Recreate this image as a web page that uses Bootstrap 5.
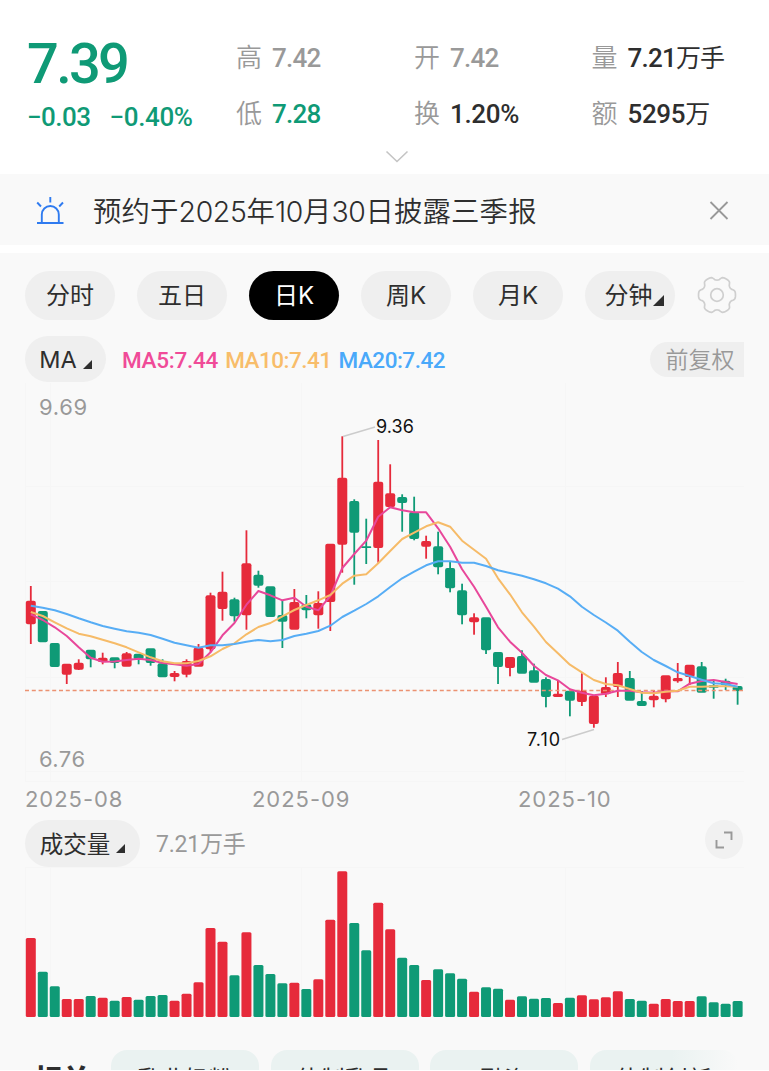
<!DOCTYPE html>
<html lang="zh-CN">
<head>
<meta charset="utf-8">
<meta name="viewport" content="width=device-width, initial-scale=1">
<title>日K</title>
<link href="https://cdn.jsdelivr.net/npm/bootstrap@5.3.0/dist/css/bootstrap.min.css" rel="stylesheet">
<style>
:root{--up:#e62a3b;--down:#0f9a76;--ink:#2e2e2e;--mute:#999}
body{font-family:Roboto,"Noto Sans CJK SC",sans-serif;color:var(--ink);background:#fff;line-height:1;overflow:hidden;height:1071px}
.quote{height:174px;padding:36px 0 0 27px}
.quote-main{width:209px;color:var(--down)}
.price{font-size:56px;font-weight:500;letter-spacing:-2.7px;line-height:56px}
.change{font-size:26px;font-weight:500;letter-spacing:-.55px;line-height:28px;margin-top:11px;gap:19px}
.change span+span{letter-spacing:-.35px}
.stat{font-size:26px;line-height:30px;letter-spacing:-.8px;font-weight:500;white-space:nowrap}
.stat .lbl{color:var(--mute);font-weight:350;margin-right:10px;letter-spacing:0}
.stat .cn{font-weight:400;letter-spacing:-.8px;font-size:25px}
.stat .wide{letter-spacing:-.35px}
.stats{padding-top:7px;row-gap:26px;display:grid;grid-template-columns:178px 177.5px 150px;grid-template-rows:30px 30px}
.notice{height:71px;background:#f9f9f9;padding:0 39px 0 36px}
.notice-text{font:400 28.4px/40px Inter,"Noto Sans CJK SC",sans-serif;font-weight:350;letter-spacing:.13px;margin-left:29px;padding-top:4px}
.notice-text span{letter-spacing:-.35px}
.panel{height:817px;background:#f9f9f9;margin-top:8px;padding-top:17px;overflow:hidden}
.tab-row{padding:0 33px 0 25px;gap:22px;height:50px}
.pill{background:#efefef;border-radius:25px;height:49px;width:90px;font:400 24px/1 Inter,"Noto Sans CJK SC",sans-serif;border:0;padding:2px 0 0;color:var(--ink);white-space:nowrap;display:flex;align-items:center;justify-content:center;flex:none}
.pill.on{background:#000;color:#fff}
.tri{flex:none;width:0;height:0;border-left:11px solid transparent;border-bottom:11px solid var(--ink)}
.ma-row{height:46px;margin-top:16px;padding:0 25px}
.ma{font-size:22.5px;font-weight:500;letter-spacing:-.25px;white-space:nowrap;padding-top:3px}
.ma-pill{width:81px;height:46px;font-size:23.5px;margin-right:16px}
.ma-pill .tri,.vol-pill .tri{border-left-width:9px;border-bottom-width:9px;margin:8px 0 0 6px}
.ma+.ma{margin-left:7px;letter-spacing:-.5px}
.adj{background:#efefef;color:var(--mute);border-radius:18px 0 0 18px;width:94px;height:35px;font-size:23px;font-weight:350;padding:2px 0 0 6px}
.axis{color:var(--mute);font:400 22px/1 Inter,sans-serif;letter-spacing:.95px}
.date-row{height:34px;padding-left:25px}
.date-cell{width:227px}
.date-cell+.date-cell{width:266px}
.vol-row{height:47px;padding:0 26px 0 25px;margin-top:4px}
.vol-pill{width:115px;height:47px;font-size:23.5px;margin-right:16px}
.vol-text{font-size:23px;color:var(--mute);letter-spacing:-.2px;padding-top:2px}
.expand{width:38px;height:39px;border-radius:50%;background:#f1f1f1;margin-bottom:8px}
.related{padding-left:34px;height:21px;overflow:hidden;margin-top:32px}
.related-title{font-size:28px;font-weight:900;line-height:28px;padding-top:17px;width:77px;flex:none}
.chip{background:#eaf2f1;border-radius:16px;width:148px;height:48px;font-size:24px;line-height:24px;padding-top:18px;text-align:center;flex:none;margin-right:11.6px}
.chip.last-chip{background:linear-gradient(90deg,#eaf2f1 55%,#f9f9f9)}
svg{display:block;flex:none}
.price-tag{font:400 18px Inter,sans-serif;fill:#111}
</style>
</head>
<body>
<header class="quote d-flex position-relative">
  <div class="quote-main flex-shrink-0">
    <div class="price">7.39</div>
    <div class="change d-flex"><span>−0.03</span><span>−0.40%</span></div>
  </div>
  <div class="stats">
    <div class="stat" style="color:#999"><span class="lbl">高</span>7.42</div>
    <div class="stat" style="color:#999"><span class="lbl">开</span>7.42</div>
    <div class="stat"><span class="lbl">量</span>7.21<span class="cn">万手</span></div>
    <div class="stat" style="color:#0f9a76"><span class="lbl">低</span>7.28</div>
    <div class="stat"><span class="lbl">换</span><span class="wide">1.20%</span></div>
    <div class="stat"><span class="lbl">额</span><span class="wide">5295</span><span class="cn">万</span></div>
  </div>
  <svg class="position-absolute" style="left:385px;top:149px" width="24" height="16" fill="none" stroke="#c4c4c4" stroke-width="1.6"><path d="M1.5 2.5 12 12.5 22.5 2.5"/></svg>
</header>

<section class="notice d-flex align-items-center">
  <svg width="28" height="30" viewBox="0 0 28 30" fill="none" stroke="#2f7bf0" stroke-width="1.9"><path d="M1 28H27.500M5.800 28V19.500a8.500 8.500 0 0 1 17 0V28M14.300 2V7.500M1.200 7.500 5 11.500M27 7.500 23.200 11.500"/></svg>
  <div class="notice-text">预约于<span>2025</span>年<span>10</span>月<span>30</span>日披露三季报</div>
  <svg class="ms-auto" width="22" height="22" fill="none" stroke="#999" stroke-width="1.8"><path d="M2.500 3 19.500 20M19.500 3 2.500 20"/></svg>
</section>

<main class="panel">
  <nav class="tab-row d-flex align-items-center">
    <button class="pill">分时</button><button class="pill">五日</button><button class="pill on">日K</button><button class="pill">周K</button><button class="pill">月K</button>
    <button class="pill ps-2">分钟<span class="tri mt-2"></span></button>
    <svg width="40" height="40" viewBox="-20 -20 40 40" fill="none" stroke="#cfcfcf" stroke-width="1.7" stroke-linejoin="round"><circle r="6.300"/><path id="gear"/></svg>
  </nav>

  <div class="ma-row d-flex align-items-center">
    <button class="pill ma-pill">MA<span class="tri"></span></button>
    <span class="ma" style="color:#f04b98">MA5:7.44</span>
    <span class="ma" style="color:#f8bd6a">MA10:7.41</span>
    <span class="ma" style="color:#4aa9fa">MA20:7.42</span>
    <div class="adj ms-auto d-flex align-items-center justify-content-center">前复权</div>
  </div>

  <svg id="kline" width="769" height="400" viewBox="0 382 769 400">
    <g stroke="#f6f6f6" fill="none"><path d="M25 486.500H744M25 581.500H744M25 677.500H744M25 771.500H744M25 781.500H744M25.500 383V782M50.500 383V782M301.500 383V782M565.500 383V782"/></g>
    <g id="candles"></g>
    <path d="M25 690.500H743" stroke="#ec9272" stroke-width="1.700" stroke-dasharray="4 2.800"/>
    <g id="lines" fill="none" stroke-width="2" stroke-linejoin="round"></g>
    <g stroke="#ccc" stroke-width="1.500"><path d="M343 436.500 375 427M562 739.500 594 729.500"/></g>
    <text class="price-tag" x="376" y="432.500" textLength="38">9.36</text>
    <text class="price-tag" x="527" y="746" textLength="33">7.10</text>
    <text class="axis" fill="#999" x="39" y="415" textLength="49">9.69</text>
    <text class="axis" fill="#999" x="39" y="767" textLength="47">6.76</text>
  </svg>

  <div class="date-row axis d-flex align-items-center"><span class="date-cell">2025-08</span><span class="date-cell">2025-09</span><span>2025-10</span></div>

  <div class="vol-row d-flex align-items-center">
    <button class="pill vol-pill">成交量<span class="tri"></span></button>
    <span class="vol-text">7.21<span>万手</span></span>
    <div class="expand ms-auto d-flex align-items-center justify-content-center"><svg width="18" height="18" fill="none" stroke="#999" stroke-width="1.900"><path d="M9 1.500H16.500V9M1.500 9V16.500H9"/></svg></div>
  </div>

  <svg id="volume" width="769" height="151" viewBox="0 867 769 151">
    <path d="M25 867.500H744M25.500 867V1017M50.500 867V1017M301.500 867V1017M565.500 867V1017" stroke="#f6f6f6" fill="none"/>
    <g id="bars"></g>
  </svg>

  <div class="related d-flex">
    <div class="related-title">相关</div>
    <div class="chip">乳业奶粉</div><div class="chip">体制乳品</div><div class="chip">融资</div><div class="chip last-chip">体制创新</div>
  </div>
</main>
<script src="https://cdn.jsdelivr.net/npm/bootstrap@5.3.0/dist/js/bootstrap.bundle.min.js"></script>
<script>
// colour, high, body top, body bottom, low
const candles=`R 586 600.7 624.3 644|G 611 611 642.3 642|G 643 643 667 667|R 664 663.7 674.7 684|R 659.3 662.7 669.7 670|G 650 649.7 659.3 667.3|R 652.7 657.7 662 664.3|G 658 657.3 663 668.3|R 652 653.3 666.7 666|G 654 653.7 659.3 664.3|G 649 648.3 663 665.7|G 659.3 663.3 677.3 677|R 671 673 677 681.3|R 659.3 661 674.7 677.3|R 644 647.7 666.7 666|R 592.7 595.3 649.3 651.7|R 571.7 591.7 609 620.7|G 597.7 599.3 616.3 621.7|R 530.3 563.3 615.3 629.7|G 570.7 574.7 585.7 587.7|G 587 586.3 617 617|G 601 615 621.7 648|R 589 602 629.7 629|G 595 604.3 610.3 618.3|R 591.3 603 615.3 628.7|R 544 543.7 602 631|R 436.3 477.7 544.7 572.7|G 499.3 501 532.7 584.7|G 518.7 546.3 548 564|R 440 481.7 548 562.7|R 464.3 493.3 507 507|G 494.3 497 503 531.7|G 496.7 512 539 540.3|R 535.7 541 546.7 558.7|G 531.7 546.3 567.3 574.3|G 561.7 568 588.3 592.3|G 583.7 590.3 615.3 624.3|R 613.3 617.3 622.3 634.7|G 618 617.3 650.3 654|G 653 652 667 684|R 658 657 668 676.3|G 650.3 656 673.7 673|G 663.7 670.3 682.7 682|G 677.3 679 697 707.3|R 680.7 693.7 697 697|G 689.3 690.7 700.7 716.3|R 673.3 690.7 702 706|R 696 695.7 724 727.7|R 677.3 687 694.3 697|R 662 673 687 697|G 671 678 700.7 700|G 691 701 706 706|R 690 695.7 700.3 707.3|R 676 675.3 699.3 702.3|R 663 678 681.3 682.7|R 665 664.7 677 685|G 662 666.3 692.7 692|G 680 685.3 687.7 698.7|G 678.7 680.7 685.3 690|G 686 686 691 704.7`.split('|').map(s=>s.split(' '));
const ma={
'#e8479a':[614.3,620,627.3,636,647.3,657.7,661.7,661.5,660,658.7,660,663,664.3,665.7,664,652.3,635.3,623,604.7,591,595.3,600.3,597.7,606.7,610.3,596,568,554,540.7,516.7,507.3,510.3,512.3,512.3,528.3,546.7,569.3,586.7,606.7,627.3,641.7,652.7,665.7,675,680.3,689.3,692.7,695.3,693.7,690.7,690.7,692.3,692.7,691.3,691.3,683.7,681,680,682,684],
'#f6bb68':[612,616,622.3,628.3,633.7,636.3,639.7,643.3,647.3,652.3,657.3,661.3,663.3,663.3,661,656.3,649,643.3,634.3,627,623,616.3,610,605,600.3,595,583.7,575.7,574.3,563.3,551,539,532.7,526.3,522.3,526.7,540.7,549.7,558.7,578.3,594.3,612.3,626.7,642,653.3,664.7,672.3,680,684,685.3,689,692.7,693.3,691.7,690.7,686.7,686.7,686.3,686.3,686.7],
'#57adf5':[605.7,607.7,610.3,614,618.3,622.3,626,628.7,631.3,632.7,635,638.7,642.7,645.3,647.7,645.3,645.3,644,641.7,640,641.3,640,636,633.7,631,625.7,617,610.7,604,596.3,587,578.3,571.7,565.3,561.3,561.3,562.7,562.7,566,570.3,573,575.7,579.3,583.3,588.7,596.3,606.7,615,622.5,630.7,641.7,652,660,666,672.3,676,679.7,683.3,684,686.7]};
const volTop=[938,971.7,986.3,999,999,996,997.7,1000.7,997,999.7,996,995,1000.7,993.7,982.3,928,941.7,975.3,932.3,965,974,983.3,982.7,989,979.3,919.7,871.3,923,950.3,902.7,929.3,957.7,965,980,969.3,973.3,978.7,991.7,987.3,988.7,999.7,996.3,998.7,998,1003,997.7,995.3,999.3,997.3,991.3,999,1000.7,1003.7,999,1001,1001,996.3,1002.3,1003.7,1001];
const X=i=>30.8+11.98*i, tint={R:'#e62a3b',G:'#0f9a76'};
let c='',b='';
candles.forEach(([k,h,t,m,l],i)=>{
  const H=m-t;
  c+=`<g fill="${tint[k]}"><rect x="${X(i)-.9}" y="${h}" width="1.8" height="${Math.max(0,l-h)}"/><rect x="${X(i)-5}" y="${t}" width="10" height="${H}" rx="${Math.min(2,H/2)}"/></g>`;
  b+=`<rect x="${X(i)-5}" y="${volTop[i]}" width="10" height="${1017-volTop[i]}" rx="1.5" fill="${tint[k]}"/>`;
});
document.getElementById('candles').innerHTML=c;
document.getElementById('bars').innerHTML=b;
document.getElementById('lines').innerHTML=Object.entries(ma).map(([s,v])=>`<polyline stroke="${s}" points="${v.map((y,i)=>X(i)+','+y).join(' ')}"/>`).join('');
// six-toothed cog outline with teeth on the axes left and right
let g='';
for(let a=0;a<360;a+=3){const r=16.6+1.9*Math.tanh(2*(Math.cos(a*6*Math.PI/180)+.35));g+=(a?'L':'M')+(r*Math.cos(a*Math.PI/180)).toFixed(2)+' '+(r*Math.sin(a*Math.PI/180)).toFixed(2);}
document.getElementById('gear').setAttribute('d',g+'Z');
</script>
</body>
</html>
